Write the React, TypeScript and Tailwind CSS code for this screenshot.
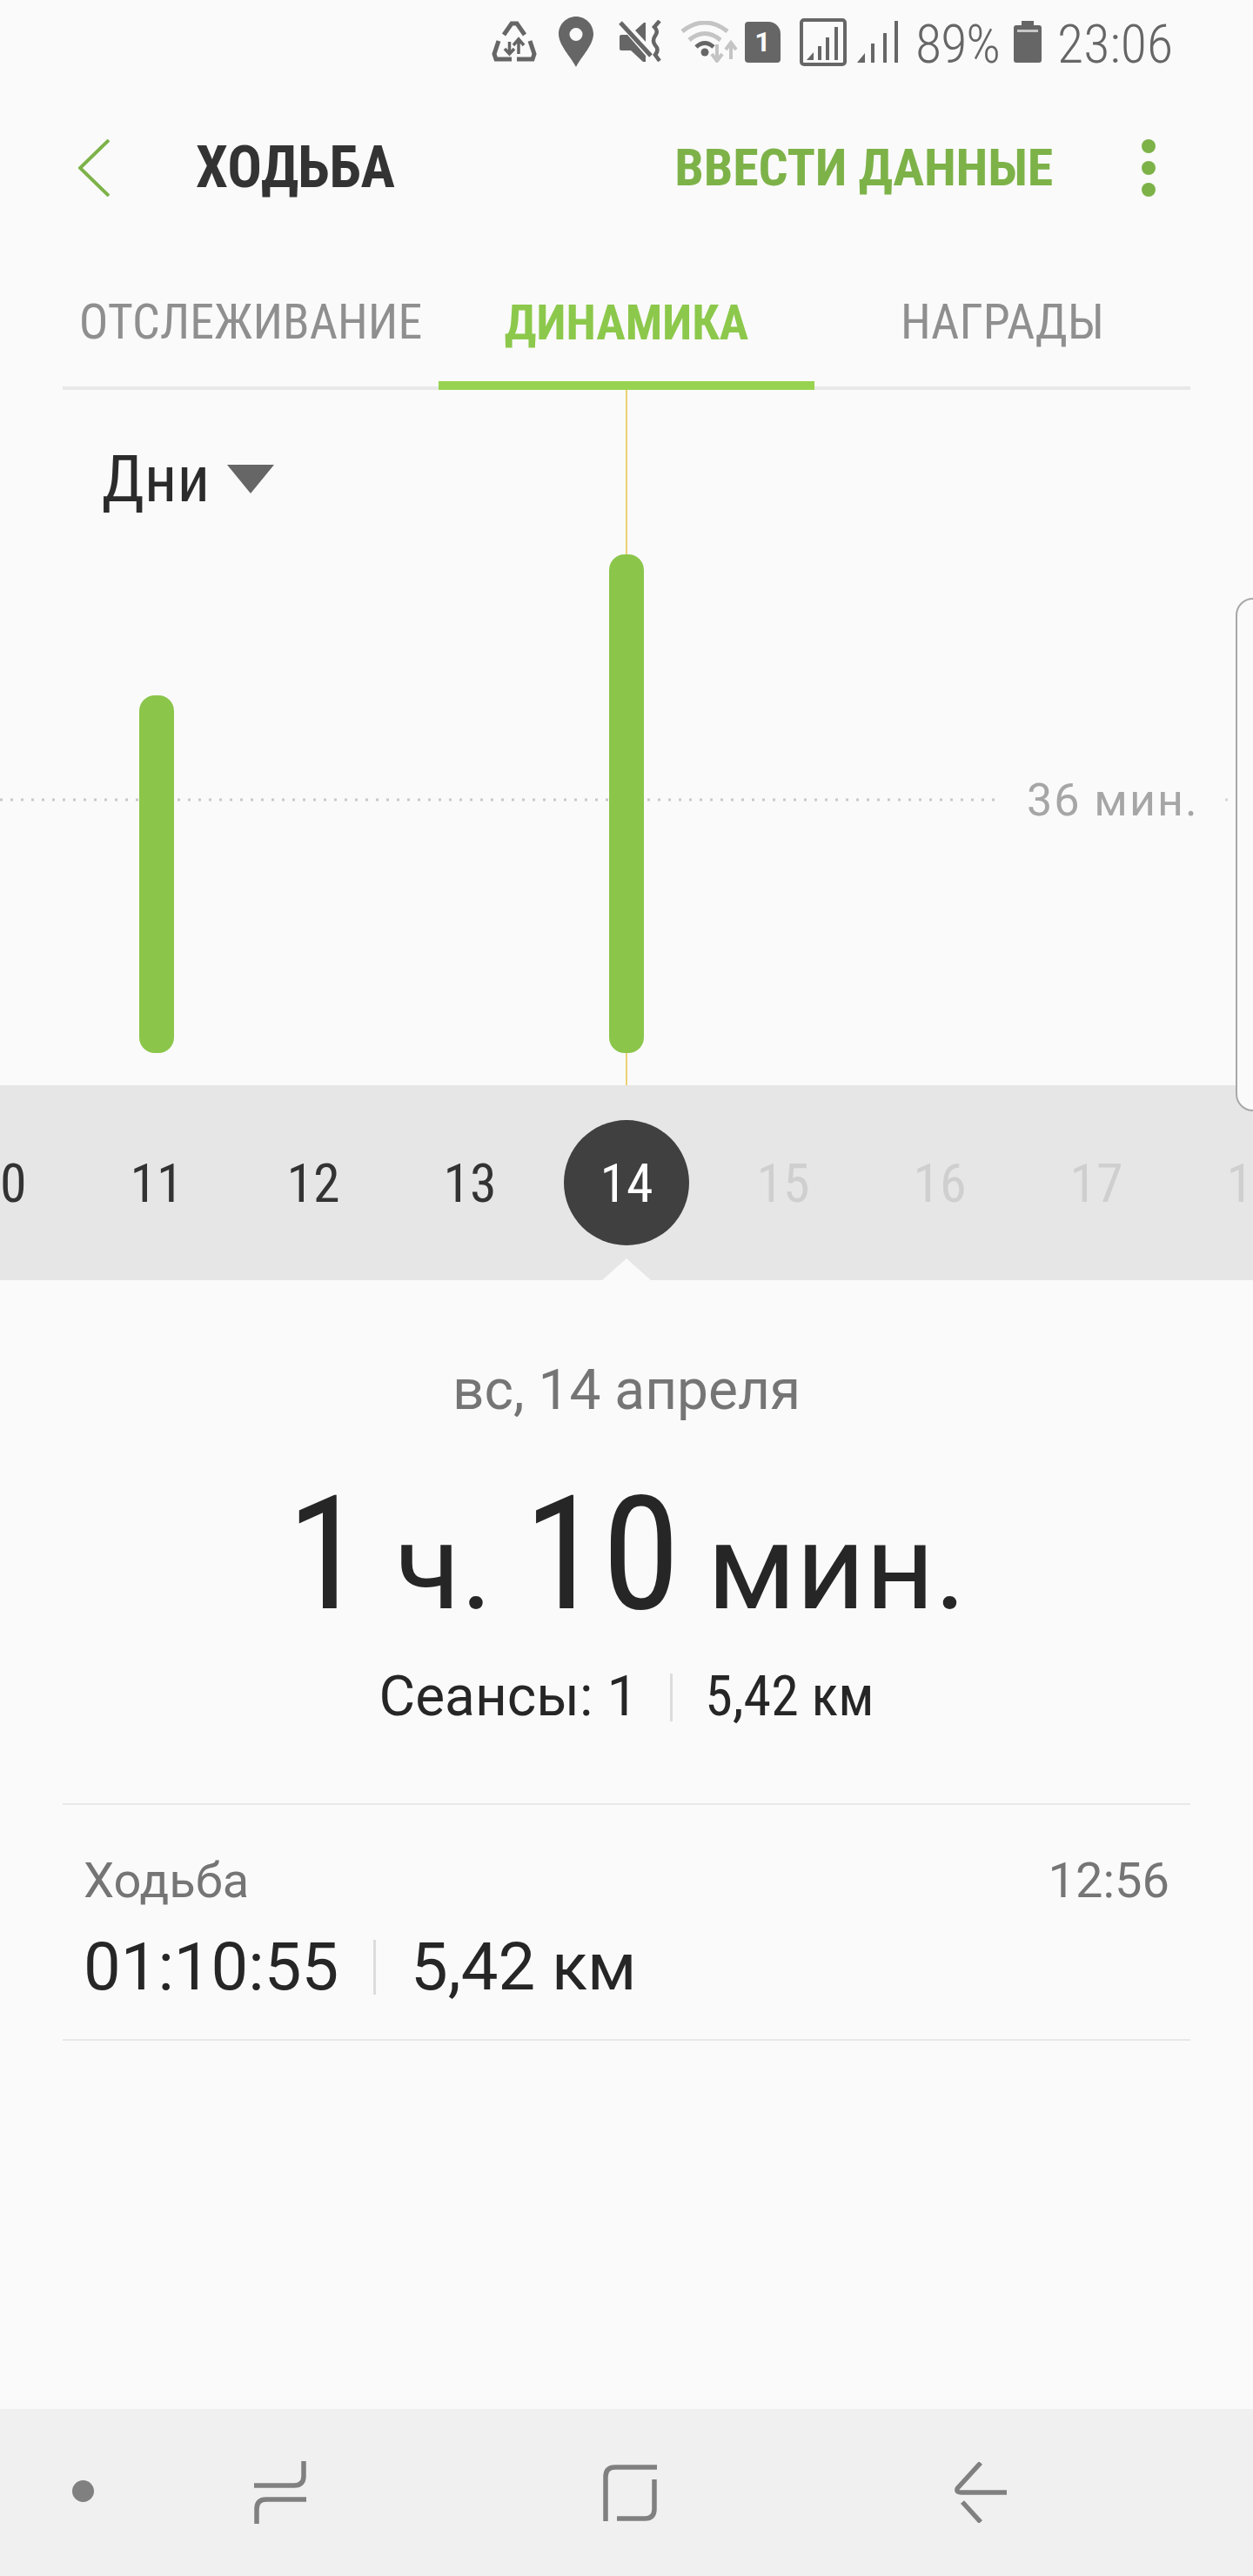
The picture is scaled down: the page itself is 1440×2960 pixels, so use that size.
const days = [
  { n: 10, c: "text-[#333]" },
  { n: 11, c: "text-[#333]" },
  { n: 12, c: "text-[#333]" },
  { n: 13, c: "text-[#333]" },
  { n: 14, c: "text-white" },
  { n: 15, c: "text-[#cfcfcf]" },
  { n: 16, c: "text-[#cfcfcf]" },
  { n: 17, c: "text-[#cfcfcf]" },
  { n: 18, c: "text-[#cfcfcf]" },
];

function StatusIcons() {
  return (
    <>
      {/* data saver triangle */}
      <svg width="52" height="48" viewBox="0 0 52 48" fill="none" stroke="#666" strokeWidth="5">
        <path d="M14 16 L23 3 H29 L38 16" />
        <path d="M8 23 L3 38 L5 44 H23" />
        <path d="M44 23 L49 38 L47 44 H29" />
        <path d="M20.5 24 V38 M15 32 L20.5 38 L26 32" strokeWidth="3.5" />
        <path d="M31 38 V22 M25 28 L31 21 L37 28" strokeWidth="3.5" />
      </svg>
      <svg className="ml-[25px]" width="40" height="58" viewBox="0 0 40 58">
        <path
          fillRule="evenodd"
          d="M20 0 C9 0 0 9 0 20 C0 33 14 46 20 58 C26 46 40 33 40 20 C40 9 31 0 20 0 Z M20 13 a7.5 7.5 0 1 1 0 15 a7.5 7.5 0 0 1 0 -15 Z"
          fill="#666"
        />
      </svg>
      <svg className="ml-[29px]" width="52" height="50" viewBox="0 0 52 50" fill="#666">
        <path d="M1 19 Q1 17 3 17 H10 L31 41 V48 L28 48 L14 35 H3 Q1 35 1 33 Z" />
        <path d="M19 12 L29 3 H31 V25 Z" />
        <path d="M5 3 L40 43" stroke="#fafafa" strokeWidth="3" />
        <path d="M2 3 L37 41" stroke="#666" strokeWidth="5" />
        <path d="M47 1 L41 8 Q46 13 42 18 Q38 24 42 29 Q47 34 42 40 L47 47" fill="none" stroke="#666" strokeWidth="4.5" />
      </svg>
      <svg className="ml-[19px]" width="66" height="48" viewBox="0 0 66 48" fill="none">
        <path d="M2 12 Q28 -8 54 12" stroke="#c4c4c4" strokeWidth="5" />
        <path d="M10 22 Q28 7 46 22" stroke="#c4c4c4" strokeWidth="5" />
        <path d="M18 30 Q28 21 38 30" stroke="#666" strokeWidth="5" />
        <circle cx="28" cy="36" r="4.5" fill="#666" />
        <path d="M42 27 V45 M36 38 L42 46 L48 38" stroke="#c4c4c4" strokeWidth="4" />
        <path d="M58 44 V26 M52 33 L58 25 L64 33" stroke="#c4c4c4" strokeWidth="4" />
      </svg>
      <div className="ml-[8px] flex h-[47px] w-[41px] items-center justify-center rounded-[4px] rounded-tr-[14px] bg-[#666] text-[32px] leading-none font-bold text-[#fafafa]">
        1
      </div>
      <svg className="ml-[22px]" width="54" height="55" viewBox="0 0 54 55" fill="#666">
        <rect x="2" y="2" width="50" height="51" rx="3" fill="none" stroke="#666" strokeWidth="4" />
        <path d="M8 48 L16 39 V48 Z" />
        <rect x="21" y="32" width="4" height="16" />
        <rect x="30" y="22" width="4" height="26" />
        <rect x="40" y="10" width="4" height="38" />
      </svg>
      <svg className="ml-[12px]" width="47" height="48" viewBox="0 0 47 48" fill="#666">
        <path d="M0 48 L9 37 V48 Z" />
        <rect x="16" y="26" width="4" height="22" />
        <rect x="30" y="14" width="4" height="34" />
        <rect x="43" y="0" width="4" height="48" />
      </svg>
      <span className="mt-[5px] ml-[20px] w-[94px] text-center text-[62px] leading-none font-light tracking-[-1px] text-[#666] [font-stretch:75%]">
        89%
      </span>
      <svg className="ml-[19px]" width="32" height="48" viewBox="0 0 32 48" fill="#666">
        <path d="M9 0 H23 V5 H29 Q32 5 32 8 V45 Q32 48 29 48 H3 Q0 48 0 45 V8 Q0 5 3 5 H9 Z" />
        <rect x="4" y="10" width="24" height="3" fill="#c8c8c8" />
      </svg>
      <span className="mt-[5px] ml-[18px] w-[127px] text-center text-[62px] leading-none font-light text-[#666] [font-stretch:75%]">
        23:06
      </span>
    </>
  );
}

function Chart() {
  return (
    <div className="relative z-10 h-[799px]">
      <svg className="block" width="1440" height="799" viewBox="0 0 1440 799">
        <line x1="0" y1="471" x2="1148" y2="471" stroke="#c9c9c9" strokeWidth="3" strokeDasharray="3 9" />
        <line x1="1408" y1="471" x2="1440" y2="471" stroke="#d6d6d6" strokeWidth="3" strokeDasharray="3 9" />
        <line x1="720" y1="0" x2="720" y2="799" stroke="#e6c34a" strokeWidth="1.5" />
        <rect x="160" y="351" width="40" height="411" rx="18" fill="#8bc64b" />
        <rect x="700" y="189" width="40" height="573" rx="18" fill="#8bc64b" />
      </svg>
      <div className="absolute top-[69px] left-[117px] flex items-center">
        <span className="text-[74px] leading-[68px] text-[#2b2b2b] [font-stretch:75%]">Дни</span>
        <svg className="mt-[-1px] ml-[20px]" width="54" height="33" viewBox="0 0 54 33">
          <path d="M0 0 H54 L27 33 Z" fill="#666" />
        </svg>
      </div>
      <span className="absolute top-[446px] left-[1180px] text-[52px] leading-[52px] tracking-[2px] text-[#a6a6a6]">36 мин.</span>
      <div className="absolute top-[239px] left-[1420px] h-[590px] w-[40px] rounded-[20px] border-2 border-[#a8a8a8] bg-[#fafafa]" />
    </div>
  );
}

export default function App() {
  return (
    <div className="flex h-[2960px] w-[1440px] flex-col overflow-hidden bg-[#fafafa] font-['Roboto',sans-serif]">
      <div className="flex h-[96px] items-center justify-end pr-[98px]">
        <StatusIcons />
      </div>

      <header className="flex h-[194px] items-center pr-[112px] pl-[90px]">
        <svg width="36" height="66" viewBox="0 0 36 66" fill="none">
          <path d="M35 1 L2 33 L35 65" stroke="#7db249" strokeWidth="4" />
        </svg>
        <h1 className="ml-[99px] text-[66px] leading-none font-bold text-[#333] [font-stretch:75%]">ХОДЬБА</h1>
        <span className="ml-auto text-[60px] leading-none font-bold tracking-[-0.2px] text-[#7db249] [font-stretch:75%]">ВВЕСТИ ДАННЫЕ</span>
        <div className="ml-[102px] flex flex-col gap-[9px]">
          <div className="size-[16px] rounded-full bg-[#7db249]" />
          <div className="size-[16px] rounded-full bg-[#7db249]" />
          <div className="size-[16px] rounded-full bg-[#7db249]" />
        </div>
      </header>

      <nav className="mx-[72px] grid h-[158px] grid-cols-3 border-b-4 border-[#e8e8e8]">
        <div className="flex items-center justify-center pt-[6px] text-[56px] text-[#8f8f8f] [font-stretch:75%]">ОТСЛЕЖИВАНИЕ</div>
        <div className="-mb-[4px] flex items-center justify-center border-b-[10px] border-[#97d350] pt-[14px] text-[56px] font-bold text-[#8cc84b] [font-stretch:75%]">
          ДИНАМИКА
        </div>
        <div className="flex items-center justify-center pt-[6px] text-[56px] text-[#8f8f8f] [font-stretch:75%]">НАГРАДЫ</div>
      </nav>

      <Chart />

      <div className="relative flex h-[224px] items-center justify-center overflow-hidden bg-[#e6e6e6]">
        {days.map((d) => (
          <div key={d.n} className="flex w-[180px] shrink-0 justify-center">
            <div
              className={`flex size-[144px] items-center justify-center rounded-full text-[62px] [font-stretch:75%] ${d.c} ${d.n === 14 ? "bg-[#404040]" : ""}`}
            >
              {d.n}
            </div>
          </div>
        ))}
        <div className="absolute bottom-0 left-[692px] h-0 w-0 border-r-[28px] border-b-[25px] border-l-[28px] border-r-transparent border-b-[#fafafa] border-l-transparent" />
      </div>

      <section className="flex flex-col items-center">
        <div className="mt-[94px] text-[64px] leading-[66px] text-[#757575] [font-stretch:96%]">вс, 14 апреля</div>
        <div className="mt-[60px] flex items-baseline text-[182px] leading-[190px] text-[#262626] [font-stretch:75%]">
          <span>1</span>
          <span className="ml-[35px] text-[138px] [font-stretch:97%]">ч.</span>
          <span className="ml-[36px]">10</span>
          <span className="ml-[31px] text-[138px] [font-stretch:97%]">мин.</span>
        </div>
        <div className="mt-[19px] flex items-center text-[64px] leading-[70px] text-[#262626]">
          <span className="[font-stretch:96%]">Сеансы: 1</span>
          <div className="mx-[37px] h-[55px] w-[3px] bg-[#dcdcdc]" />
          <span className="[font-stretch:82%]">5,42 км</span>
        </div>
      </section>

      <div className="mx-[72px] mt-[87px] border-y-2 border-[#e8e8e8] pt-[55px] pr-[24px] pb-[40px] pl-[24px]">
        <div className="flex justify-between text-[56px] leading-[64px] text-[#757575] [font-stretch:90%]">
          <span>Ходьба</span>
          <span>12:56</span>
        </div>
        <div className="mt-[24px] flex items-center text-[76px] leading-[86px] text-[#262626]">
          <span className="[font-stretch:93%]">01:10:55</span>
          <div className="mx-[40px] h-[63px] w-[3px] bg-[#dcdcdc]" />
          <span className="[font-stretch:93%]">5,42 км</span>
        </div>
      </div>

      <footer className="mt-auto flex h-[192px] items-center bg-[#f0f0f0] pl-[83px]">
        <div className="mb-[4px] size-[25px] rounded-full bg-[#808080]" />
        <svg className="ml-[184px]" width="60" height="72" viewBox="0 0 60 72" fill="none" stroke="#808080" strokeWidth="5.5">
          <path d="M0 28 H46 Q57 28 57 17 V0" />
          <path d="M60 44 H14 Q3 44 3 55 V72" />
        </svg>
        <svg className="ml-[341px]" width="62" height="66" viewBox="0 0 62 66" fill="none" stroke="#808080" strokeWidth="5.5">
          <path d="M62 4 H14 Q3 4 3 15 V66" />
          <path d="M59 18 V52 Q59 63 48 63 H16" />
        </svg>
        <svg className="ml-[342px]" width="60" height="70" viewBox="0 0 60 70" fill="none" stroke="#808080" strokeWidth="5.5">
          <path d="M30 1 L3.5 30 Q1 35 8 35 H60" />
          <path d="M9 46 L30 69" />
        </svg>
      </footer>
    </div>
  );
}
